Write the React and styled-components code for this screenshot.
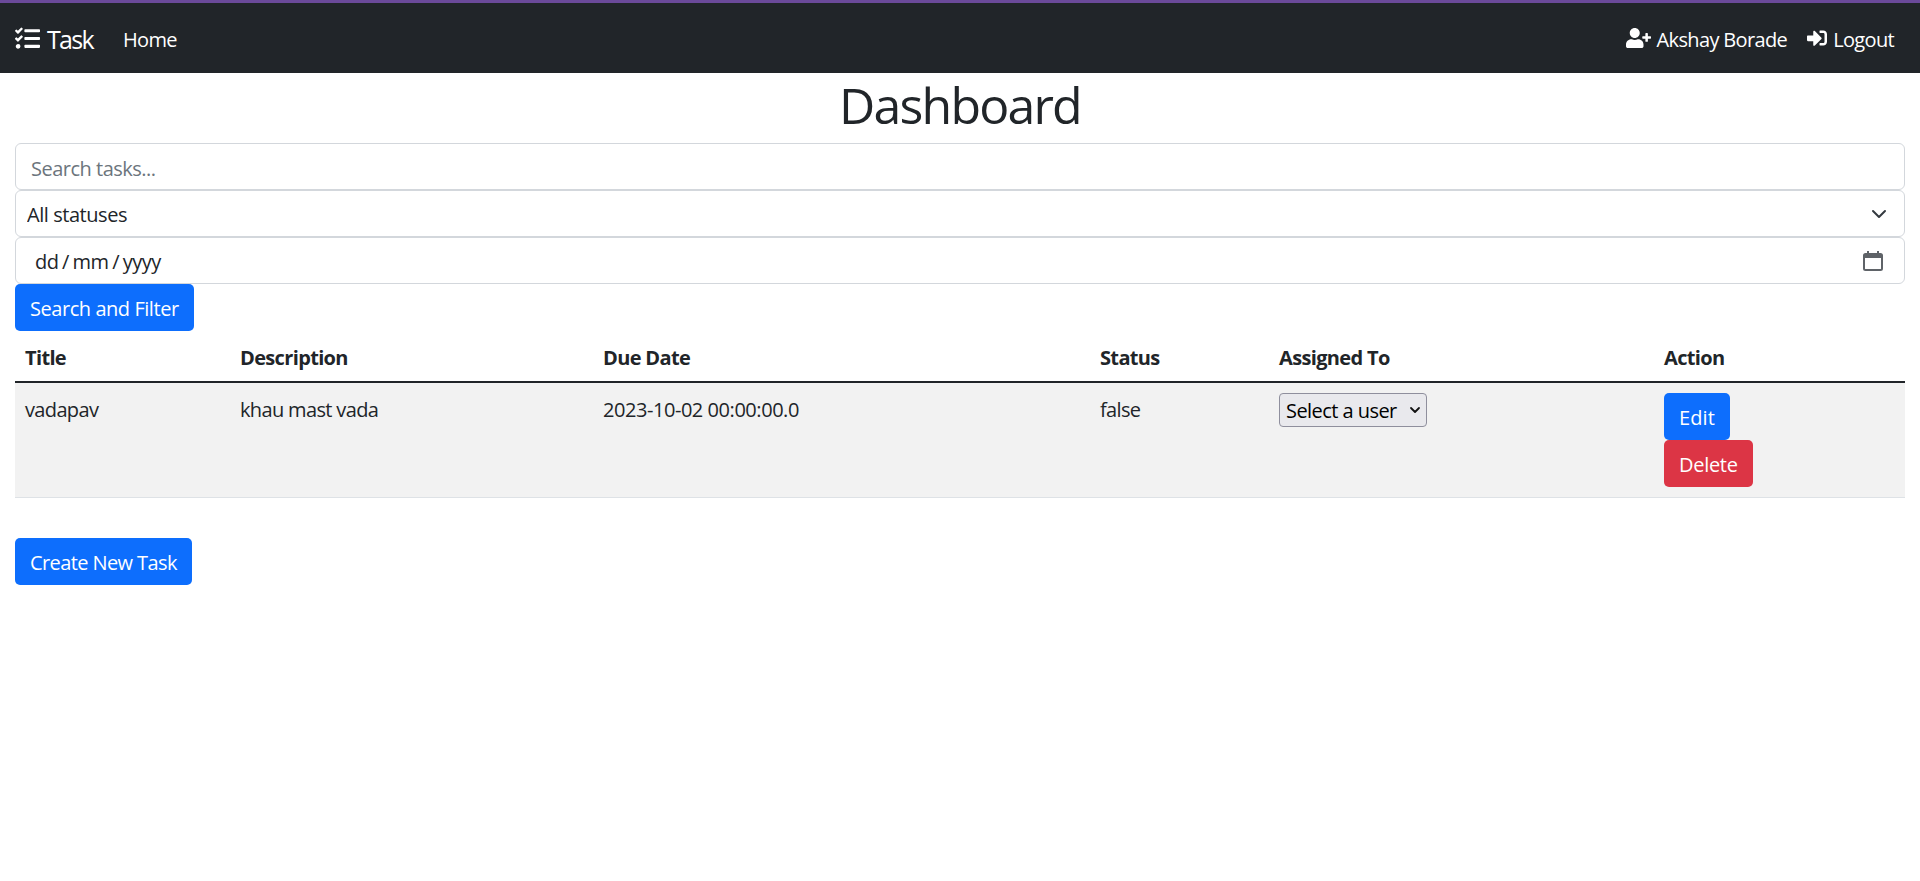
import React from "react";
import styled, { createGlobalStyle } from "styled-components";
import { FaTasks, FaUserPlus, FaSignInAlt } from "react-icons/fa";

const GlobalStyle = createGlobalStyle`
  * { box-sizing: border-box; }
  body {
    margin: 0;
    background: #fff;
    color: #212529;
    font-family: "Open Sans", "Noto Sans", sans-serif;
    font-size: 20px;
    line-height: 30px;
    letter-spacing: -0.45px;
  }
`;

const chevron = "data:image/svg+xml,%3csvg xmlns='http://www.w3.org/2000/svg' viewBox='0 0 16 16'%3e%3cpath fill='none' stroke='%23343a40' stroke-linecap='round' stroke-linejoin='round' stroke-width='2' d='m2 5 6 6 6-6'/%3e%3c/svg%3e";
const smallChevron = "data:image/svg+xml,%3csvg xmlns='http://www.w3.org/2000/svg' viewBox='0 0 12 8'%3e%3cpath fill='none' stroke='%23111' stroke-linecap='round' stroke-linejoin='round' stroke-width='1.8' d='m2 2 4 4 4-4'/%3e%3c/svg%3e";

const Navbar = styled.nav`
  height: 73px;
  background: #212529;
  border-top: 3px solid #6b4a9a;
  padding: 0 26px 0 15px;
  display: flex;
  align-items: center;
  justify-content: space-between;
  color: #fff;
`;
const NavGroup = styled.div`
  display: flex;
  align-items: center;
`;
const Brand = styled.a`
  display: flex;
  align-items: center;
  gap: 7px;
  font-size: 25px;
  letter-spacing: -1.7px;
  margin-right: 30px;
  padding-top: 2px;
  svg { width: 25px; height: 25px; margin-top: -2px; }
`;
const NavLink = styled.a`
  display: flex;
  align-items: center;
  gap: 6px;
  padding-top: 3px;
  letter-spacing: -0.65px;
  margin-left: ${({ $gap }) => $gap || 0}px;
  svg { width: ${({ $icon }) => $icon || 20}px; height: 20px; margin-top: -3px; }
`;
const Main = styled.main`
  padding: 0 15px;
`;
const Heading = styled.h1`
  margin: 0 0 10px;
  padding-top: 4px;
  font-size: 50px;
  font-weight: 400;
  line-height: 56px;
  letter-spacing: -1.8px;
  text-align: center;
`;
const FilterForm = styled.form`
  display: flex;
  flex-direction: column;
  align-items: flex-start;
`;
const TextInput = styled.input`
  width: 100%;
  height: 47px;
  padding: 3px 15px 0;
  border: 1px solid #d3d7dc;
  border-radius: 6px;
  font: inherit;
  letter-spacing: -0.5px;
  color: #212529;
  &::placeholder { color: #6c757d; opacity: 1; }
`;
const StatusSelect = styled.select`
  appearance: none;
  width: 100%;
  height: 47px;
  padding: 3px 11px 0;
  border: 1px solid #d3d7dc;
  border-radius: 6px;
  background: #fff url("${chevron}") no-repeat right 17px center / 16px 16px;
  font: inherit;
  letter-spacing: inherit;
  color: #212529;
`;
const DateField = styled.div`
  width: 100%;
  height: 47px;
  padding: 0 21px 0 19px;
  border: 1px solid #d3d7dc;
  border-radius: 6px;
  display: flex;
  align-items: center;
  justify-content: space-between;
  span { padding-top: 3px; word-spacing: -1.2px; }
  svg { width: 20px; height: 20px; }
`;
const Button = styled.button`
  height: 47px;
  padding: 3px 15px 0;
  border: 0;
  border-radius: 5px;
  background: ${({ $danger }) => ($danger ? "#dc3545" : "#0d6efd")};
  color: #fff;
  font: inherit;
  letter-spacing: ${({ $spacing }) => $spacing ?? -0.45}px;
  flex: none;
`;
const Table = styled.table`
  width: 100%;
  table-layout: fixed;
  border-collapse: collapse;
  margin-bottom: 40px;
`;
const HeadCell = styled.th`
  height: 51px;
  padding: 12px 10px 8px;
  font-weight: 700;
  letter-spacing: -0.65px;
  text-align: left;
  border-bottom: 2px solid #212529;
`;
const Row = styled.tr`
  background: #f2f2f2;
  border-bottom: 1px solid #dee2e6;
`;
const Cell = styled.td`
  padding: 10px;
  vertical-align: top;
`;
const TextCell = styled(Cell)`
  padding-top: 12px;
  letter-spacing: ${({ $spacing }) => $spacing ?? -0.65}px;
`;
const UserSelect = styled.select`
  appearance: none;
  display: block;
  width: 148px;
  height: 34px;
  padding: 1px 5px 0 6px;
  border: 1px solid #8f8f9d;
  border-radius: 4px;
  background: #e9e9ed url("${smallChevron}") no-repeat right 5px center / 12px 8px;
  font: inherit;
  letter-spacing: -0.55px;
  color: #000;
`;
const Actions = styled.div`
  display: flex;
  flex-direction: column;
  align-items: flex-start;
`;

const columns = [
  ["Title", 215],
  ["Description", 363],
  ["Due Date", 497],
  ["Status", 179],
  ["Assigned To", 385],
  ["Action", 251],
];

const CalendarIcon = () => (
  <svg viewBox="0 0 20 20" fill="#5f6368">
    <path d="M4 0h2v2h8V0h2v2h1.5A2.5 2.5 0 0 1 20 4.500v13a2.500 2.500 0 0 1-2.500 2.500h-15A2.500 2.500 0 0 1 0 17.500v-13A2.500 2.500 0 0 1 2.500 2H4zM2 7v10.500a.5.5 0 0 0 .5.5h15a.5.5 0 0 0 .5-.5V7z" />
  </svg>
);

export default function App() {
  return (
    <>
      <GlobalStyle />
      <Navbar>
        <NavGroup>
          <Brand><FaTasks />Task</Brand>
          <NavLink>Home</NavLink>
        </NavGroup>
        <NavGroup>
          <NavLink $icon={25}><FaUserPlus />Akshay Borade</NavLink>
          <NavLink $gap={20}><FaSignInAlt />Logout</NavLink>
        </NavGroup>
      </Navbar>
      <Main>
        <Heading>Dashboard</Heading>
        <FilterForm>
          <TextInput placeholder="Search tasks..." />
          <StatusSelect defaultValue="all">
            <option value="all">All statuses</option>
          </StatusSelect>
          <DateField>
            <span>dd / mm / yyyy</span>
            <CalendarIcon />
          </DateField>
          <Button type="button">Search and Filter</Button>
        </FilterForm>
        <Table>
          <colgroup>
            {columns.map(([name, width]) => <col key={name} width={width} />)}
          </colgroup>
          <thead>
            <tr>
              {columns.map(([name]) => <HeadCell key={name}>{name}</HeadCell>)}
            </tr>
          </thead>
          <tbody>
            <Row>
              <TextCell>vadapav</TextCell>
              <TextCell>khau mast vada</TextCell>
              <TextCell $spacing={-0.45}>2023-10-02 00:00:00.0</TextCell>
              <TextCell>false</TextCell>
              <Cell>
                <UserSelect defaultValue="">
                  <option value="">Select a user</option>
                </UserSelect>
              </Cell>
              <Cell>
                <Actions>
                  <Button type="button" $spacing={0.1}>Edit</Button>
                  <Button type="button" $danger $spacing={-0.3}>Delete</Button>
                </Actions>
              </Cell>
            </Row>
          </tbody>
        </Table>
        <Button type="button" $spacing={-0.6}>Create New Task</Button>
      </Main>
    </>
  );
}
